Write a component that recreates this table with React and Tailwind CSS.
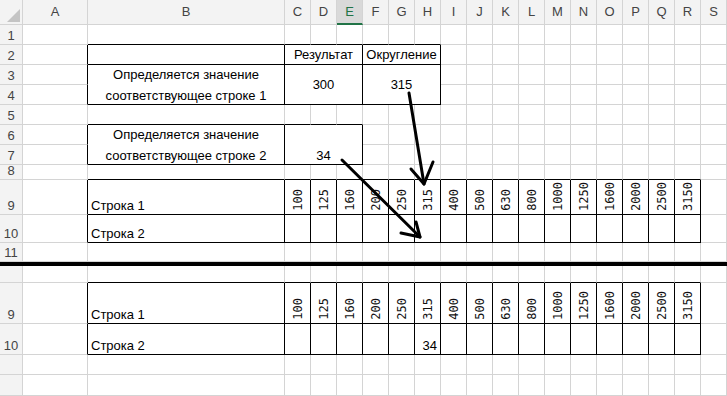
import React from 'react';

const LETTERS = ['A', 'B', 'C', 'D', 'E', 'F', 'G', 'H', 'I', 'J', 'K', 'L', 'M', 'N', 'O', 'P', 'Q', 'R', 'S'];
const VALUES = ['100', '125', '160', '200', '250', '315', '400', '500', '630', '800', '1000', '1250', '1600', '2000', '2500', '3150'];

// grid rows (css index) -> row header label
const ROW_LABELS = { 2: '1', 3: '2', 4: '3', 5: '4', 6: '5', 7: '6', 8: '7', 9: '8', 10: '9', 11: '10', 12: '11', 14: '', 15: '9', 16: '10', 17: '', 18: '' };
const DATA_ROWS = [2, 3, 4, 5, 6, 7, 8, 9, 10, 11, 12, 14, 15, 16, 17, 18];

// bordered blocks: [rowFrom, rowTo, colFrom, colTo] in css grid indices (B = 3)
const TABLES = [
  [3, 5, 3, 9],
  [7, 8, 3, 6],
  [10, 11, 3, 19],
  [15, 16, 3, 19],
];

const inTable = (r, c) => TABLES.some(([r1, r2, c1, c2]) => r >= r1 && r <= r2 && c >= c1 && c <= c2);

const wrap1 = ['Определяется значение', 'соответствующее строке 1'];
const wrap2 = ['Определяется значение', 'соответствующее строке 2'];

// merged / filled cells
const CELLS = {
  '3-4': { cs: 3, text: 'Результат', pos: 'center' },
  '3-7': { cs: 3, text: 'Округление', pos: 'center' },
  '4-3': { rs: 2, lines: wrap1 },
  '4-4': { cs: 3, rs: 2, text: '300', pos: 'center' },
  '4-7': { cs: 3, rs: 2, text: '315', pos: 'center' },
  '7-3': { rs: 2, lines: wrap2 },
  '7-4': { cs: 3, rs: 2, text: '34', pos: 'bottom' },
  '10-3': { text: 'Строка 1', pos: 'left' },
  '11-3': { text: 'Строка 2', pos: 'left' },
  '15-3': { text: 'Строка 1', pos: 'left' },
  '16-3': { text: 'Строка 2', pos: 'left' },
  '16-9': { text: '34', pos: 'right' },
};
VALUES.forEach((v, i) => {
  CELLS[`10-${i + 4}`] = { vertical: v };
  CELLS[`15-${i + 4}`] = { vertical: v };
});

const covered = new Set();
Object.entries(CELLS).forEach(([key, cell]) => {
  const [r, c] = key.split('-').map(Number);
  for (let i = 0; i < (cell.rs || 1); i++) {
    for (let j = 0; j < (cell.cs || 1); j++) {
      if (i || j) covered.add(`${r + i}-${c + j}`);
    }
  }
});

const colSpan = { 1: '', 3: 'col-span-3' };
const rowSpan = { 1: '', 2: 'row-span-2' };
const posClass = {
  center: 'items-center justify-center',
  bottom: 'items-end justify-center pb-px',
  left: 'items-end justify-start pl-[3px] pb-px',
  right: 'items-end justify-end pr-[3px] pb-px',
};

function Cell({ r, c, cell }) {
  const cs = cell.cs || 1;
  const rs = cell.rs || 1;
  const blackRight = inTable(r, c) || inTable(r, c + cs);
  const blackBottom = inTable(r, c) || inTable(r + rs, c);
  const border = [
    'border-r border-b',
    blackRight ? 'border-r-black' : 'border-r-[#d4d4d4]',
    blackBottom ? 'border-b-black' : 'border-b-[#d4d4d4]',
  ].join(' ');

  let inner = null;
  let layout = '';
  if (cell.lines) {
    layout = 'flex-col items-center justify-center';
    inner = cell.lines.map((l) => (
      <span key={l} className="leading-[21px] whitespace-nowrap">{l}</span>
    ));
  } else if (cell.vertical) {
    layout = 'items-end justify-center pb-[3px]';
    inner = (
      <span className="[writing-mode:vertical-rl] rotate-180 font-['DejaVu_Sans_Mono',monospace] text-[12px] leading-none text-[#111]">
        {cell.vertical}
      </span>
    );
  } else if (cell.text) {
    layout = posClass[cell.pos];
    inner = <span className="whitespace-nowrap leading-[15px]">{cell.text}</span>;
  }

  return (
    <div className={`flex bg-white text-black overflow-visible ${colSpan[cs]} ${rowSpan[rs]} ${border} ${layout}`}>
      {inner}
    </div>
  );
}

export default function App() {
  const items = [];

  // column headers
  items.push(
    <div key="corner" className="bg-[#f3f3f3] border-r border-b border-[#d4d4d4] relative">
      <svg className="absolute right-[2px] bottom-[2px]" width="13" height="13" viewBox="0 0 13 13">
        <polygon points="13,0 13,13 0,13" fill="#c4c4c4" />
      </svg>
    </div>
  );
  LETTERS.forEach((l) =>
    items.push(
      l === 'E' ? (
        <div key={l} className="flex items-center justify-center bg-[#d9d9d9] border-r border-r-[#d4d4d4] border-b-2 border-b-[#217346] text-[#217346] text-[13px]">
          {l}
        </div>
      ) : (
        <div key={l} className="flex items-center justify-center bg-[#f3f3f3] border-r border-b border-[#d4d4d4] text-[#444] text-[13px]">
          {l}
        </div>
      )
    )
  );

  DATA_ROWS.forEach((r) => {
    if (r === 14) {
      items.push(<div key="split" className="col-span-full bg-black" />);
    }
    items.push(
      <div key={`h${r}`} className="flex items-end justify-center pb-px bg-[#f3f3f3] border-r border-b border-[#d4d4d4] text-[#444] text-[13px] leading-[15px]">
        {ROW_LABELS[r]}
      </div>
    );
    for (let c = 2; c <= 20; c++) {
      const key = `${r}-${c}`;
      if (covered.has(key)) continue;
      items.push(<Cell key={key} r={r} c={c} cell={CELLS[key] || {}} />);
    }
  });

  return (
    <div className="relative w-[727px] h-[396px] overflow-hidden bg-white font-['Liberation_Sans',Arial,sans-serif] text-[13px]">
      <div className="grid grid-cols-[23px_65px_197px_repeat(17,26px)] grid-rows-[25px_20px_20px_20px_20px_20px_20px_20px_15px_35px_28px_19px_4px_17px_41px_31px_20px_21px]">
        {items}
      </div>

      {/* arrows drawn over the sheet */}
      <svg className="absolute left-0 top-0 pointer-events-none" width="727" height="396">
        <g stroke="black" strokeWidth="3" fill="none" strokeLinecap="round" strokeLinejoin="round">
          <line x1="409" y1="93" x2="424" y2="184" />
          <polyline points="411,169 424,184 433,162" />
          <line x1="342" y1="160" x2="420" y2="237" />
          <polyline points="401,233 420,237 416,222" />
        </g>
      </svg>
    </div>
  );
}
